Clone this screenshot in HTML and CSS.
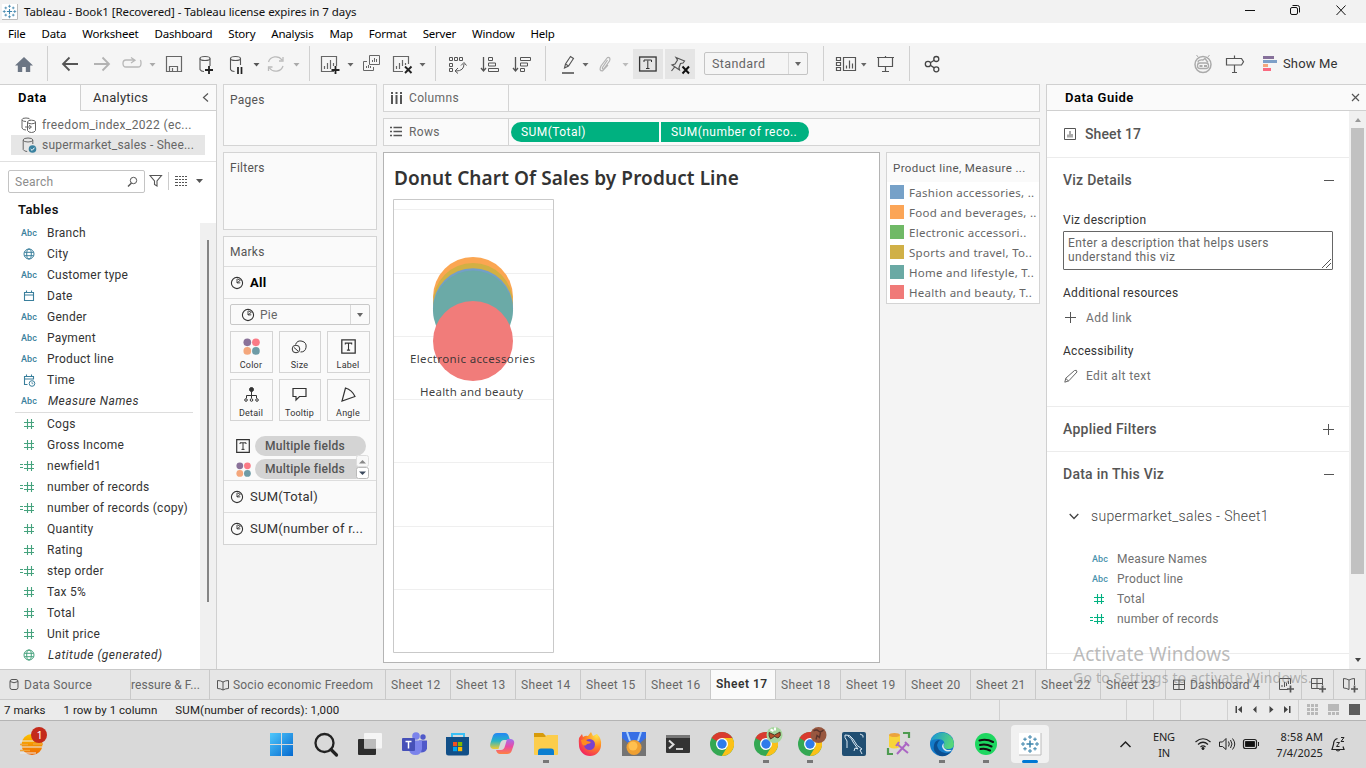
FILE: index.html
```html
<!DOCTYPE html>
<html lang="en">
<head>
<meta charset="utf-8">
<title>Tableau - Book1</title>
<link rel="stylesheet" href="styles.css">
</head>
<body>
<svg class="defs" width="0" height="0">
  <symbol id="pie" viewBox="0 0 14 14"><g fill="none" stroke="#333" stroke-width="1.1"><circle cx="7" cy="7" r="5.600"/><path d="M7 7V3M7 7l3.600-3M7.300 7l3-.2M7.400 2.800l2.800 1.500" stroke-width=".9"/></g></symbol>
  <symbol id="globe" viewBox="0 0 12 12"><g fill="none" stroke="currentColor"><circle cx="6" cy="6" r="5"/><ellipse cx="6" cy="6" rx="2.300" ry="5"/><path d="M1.400 4.300h9.200M1.400 7.700h9.200"/></g></symbol>
  <symbol id="hash" viewBox="0 0 18 12"><path d="M9.500 1v10M13.500 1v10M6 4.500h10M6 8.500h10" fill="none" stroke="currentColor" stroke-width="1.100"/></symbol>
  <symbol id="ehash" viewBox="0 0 18 12"><path d="M9.500 1v10M13.500 1v10M6 4.500h10M6 8.500h10M2 4.500h3M2 7.500h3" fill="none" stroke="currentColor" stroke-width="1.100"/></symbol>
  <symbol id="cal" viewBox="0 0 18 14"><path d="M6.500 3.500h9v8h-9zM6.500 6h9M8.500 1.500v2M13.500 1.500v2" fill="none" stroke="currentColor" stroke-width="1.100"/></symbol>
  <symbol id="calclock" viewBox="0 0 18 14"><path d="M9.500 11.500h-3v-8h9v3M6.500 6h9M8.500 1.500v2M13.500 1.500v2" fill="none" stroke="currentColor" stroke-width="1.100"/><circle cx="14" cy="10.500" r="2.800" fill="none" stroke="currentColor"/><path d="M14 9v1.700h1.300" fill="none" stroke="currentColor" stroke-width=".7"/></symbol>
  <symbol id="tbox" viewBox="0 0 14 14"><path d="M.7.7h12.600v12.600H.7z" fill="none" stroke="#333" stroke-width="1.200"/><path d="M4 5V3.800h6V5M7 4v6.300M5.500 10.400h3" fill="none" stroke="#333"/></symbol>
  <symbol id="dots" viewBox="0 0 15 15"><circle cx="3.800" cy="3.800" r="3.400" fill="#8a7299"/><circle cx="11.400" cy="3.800" r="3.400" fill="#fa7a86"/><circle cx="3.800" cy="11.400" r="3.400" fill="#f4a77c"/><circle cx="11.400" cy="11.400" r="3.400" fill="#6d9ba6"/></symbol>
  <symbol id="chrome" viewBox="0 0 24 24"><circle cx="12" cy="12" r="12" fill="#34a853"/><path d="M12 12 1.600 6A12 12 0 0 1 22.400 6z" fill="#d93a2f"/><path d="M12 6h10.400A12 12 0 0 1 11.800 24L17.200 15z" fill="#fbc117"/><circle cx="12" cy="12" r="6" fill="#fff"/><circle cx="12" cy="12" r="4.700" fill="#2f7bea"/></symbol>
  <symbol id="tableau" viewBox="0 0 20 20"><g fill="none" stroke="#3b83ab" stroke-width="1"><path d="M10 6.500v7M6.500 10h7" stroke-width="1.500"/><path d="M10 1v4M8 3h4M10 15v4M8 17h4M3 8v4M1 10h4M17 8v4M15 10h4M5 3.500v3.500M3.200 5.200h3.600M15 3.500v3.500M13.200 5.200h3.600M5 13v3.500M3.200 14.800h3.600M15 13v3.500M13.200 14.800h3.600"/></g></symbol>
</svg>

<div class="titlebar">
  <svg class="appicon" viewBox="0 0 16 16"><path d="M0 0h16v16H0z" fill="#fff"/><path d="M15.500 0v15.500H0" fill="none" stroke="#bbb"/><use href="#tableau" x="0" y="0" width="15" height="15"/></svg>
  <span class="wintitle">Tableau - Book1 [Recovered] - Tableau license expires in 7 days</span>
  <svg class="winbtns" width="126" height="23" viewBox="1240 0 126 23" fill="none" stroke="#111"><path d="M1245 10.500h10"/><rect x="1290.500" y="7.500" width="7" height="7" rx="1.500"/><path d="M1292.500 5.500h5q2 0 2 2v5"/><path d="M1336.500 5.500l9 9.500M1345.500 5.500l-9 9.500"/></svg>
</div>
<nav class="menubar"><span>File</span><span>Data</span><span>Worksheet</span><span>Dashboard</span><span>Story</span><span>Analysis</span><span>Map</span><span>Format</span><span>Server</span><span>Window</span><span>Help</span></nav>

<div class="toolbar">
  <svg class="tg g1" viewBox="0 46 47 35"><path d="M24 57l9 8.500h-2.800V72h-4.400v-5h-3.600v5h-4.400v-6.500H15z" fill="#6c7684"/></svg>
  <svg class="tg g2" viewBox="48 46 261 35" fill="none" stroke="#555">
    <path d="M63 64h15M69.500 57.500L63 64l6.500 6.500" stroke-width="1.800"/>
    <path d="M94 64h15M102.500 57.500L109 64l-6.500 6.500" stroke="#b3b3b3" stroke-width="1.800"/>
    <path d="M135 60h-9q-3 0-3 3.500t3 3.500h12q3 0 3-3.500t-1-3M131 57.500l4 2.700-4 2.800" stroke="#b8b8b8" stroke-width="1.300"/>
    <path d="M149.500 63h6l-3 3.500z" fill="#aaa" stroke="none"/>
    <path d="M166.500 56.500h15v15h-15zM169.500 71v-4.500h8V71M172.500 71v-3" stroke="#666" stroke-width="1.200"/>
    <g stroke="#555" stroke-width="1.100"><ellipse cx="205" cy="58.500" rx="5" ry="2"/><path d="M200 58.500v11q1 2 4 2M210 58.500V66"/></g><path d="M209 66v8M205 70h8" stroke="#222" stroke-width="1.800"/>
    <g stroke="#555" stroke-width="1.100"><ellipse cx="235.500" cy="58.500" rx="5" ry="2"/><path d="M230.500 58.500v11q1 2 4 2M240.500 58.500V65"/></g><path d="M238 67v7M241.500 67v7" stroke="#222" stroke-width="1.700"/>
    <path d="M253.500 63h6l-3 3.500z" fill="#555" stroke="none"/><path d="M293.500 63h6l-3 3.500z" fill="#aaa" stroke="none"/>
    <path d="M268.500 62a7.500 7 0 0 1 13.500-2M283 66a7.500 7 0 0 1-13.500 2M283 57v4h-4M268.500 71v-4h4" stroke="#bbb" stroke-width="1.300"/>
  </svg>
  <svg class="tg g3" viewBox="310 46 125 35" fill="none" stroke="#666">
    <path d="M334 71.500h-12.500v-15h15V66M324.500 69v-3M327.500 69v-6M330.500 69v-9M333.500 66v-3" stroke-width="1.200"/><path d="M335.500 66v8M331.500 70h8" stroke="#222" stroke-width="1.800"/>
    <path d="M347.500 63h6l-3 3.500zM419.500 63h6l-3 3.500z" fill="#666" stroke="none"/>
    <path d="M369.500 55.500h10v9h-10zM372.500 62v-2M374.500 62v-4M376.500 62v-3M367 61.500h-3.500v9h10V67M366.500 68v-2M368.500 68v-3M370.500 68v-2"/>
    <path d="M403 71.500h-9.500v-15h15V64M396.500 69v-3M399.500 69v-6M402.500 66v-6M405.500 65v-2" stroke-width="1.200"/><path d="M405 66.500l6.500 6.500M411.500 66.500L405 73" stroke="#222" stroke-width="1.900"/>
  </svg>
  <svg class="tg g4" viewBox="436 46 109 35" fill="none" stroke="#555">
    <path d="M449.500 57.500h3v3h-3zM454.500 57.500h3v3h-3zM459.500 57.500h3v3h-3zM449.500 63.500h3v3h-3zM449.500 68.500h3v3h-3z"/><path d="M456 71q8 0 8-7M458 68l-3 3 3 2.500M461 65.500l3-3 2.500 3"/>
    <path d="M483.500 57v13.500M481 68l2.500 3 2.500-3" stroke-width="1.300"/><path d="M488.500 57.500h4v3h-4zM488.500 63h7v3h-7zM488.500 68.500h10v3h-10z"/>
    <path d="M515.500 57v13.500M513 68l2.500 3 2.500-3" stroke-width="1.300"/><path d="M520.500 57.500h10v3h-10zM520.500 63h7v3h-7zM520.500 68.500h4v3h-4z"/>
  </svg>
  <svg class="tg g5" viewBox="546 46 84 35" fill="none" stroke="#555">
    <path d="M564.500 68l1-4 5-7.500 3 2-5 7.500zM565.500 64l3 2" stroke-width="1.100"/><path d="M562 73h12" stroke-width="1.600"/>
    <path d="M582.500 63h6l-3 3.500z" fill="#666" stroke="none"/><path d="M622.500 63h6l-3 3.500z" fill="#bbb" stroke="none"/>
    <path d="M607.500 60l-5 7.500q-.5 2 1.200 1.500l5.800-8q1.500-4-2-3.500l-6.500 8.500q-2.500 5 1.500 5L608 65" stroke="#b3b3b3" stroke-width="1.200"/>
  </svg>
  <svg class="toggle" viewBox="633 49 30 30"><rect x="639.600" y="57" width="16.500" height="14" fill="none" stroke="#333" stroke-width="1.300"/><path d="M644 62v-2h7.500v2M647.800 60.500v8M646 68.500h3.500" fill="none" stroke="#333"/></svg>
  <svg class="toggle" viewBox="665 49 30 30"><path d="M676 57.500l8.500 3.500-1.500 2-2.500.5-1.500 4 .5 2.500-7.500-5 3-1 2.500-4zM675 66.500l-3.500 4.500" fill="none" stroke="#555" stroke-width="1.200"/><path d="M682.500 66.500l6.500 7M689 66.500l-6.500 7" stroke="#111" stroke-width="2"/></svg>
  <div class="fit"><span>Standard</span><i class="caret"></i></div>
  <svg class="tg g6" viewBox="824 46 85 35" fill="none" stroke="#555"><path d="M836.500 57.500h4v3h-4zM836.500 62.500h4v3h-4zM836.500 67.500h4v3h-4zM843.500 57.500h12v13h-12zM846.500 68.500v-3M849.500 68.500v-8M852.500 68.500v-5" stroke-width="1.200"/><path d="M861 63h5.500l-2.700 3.500z" fill="#666" stroke="none"/><path d="M877 57.500h17M878.500 57.500v9h14v-9M885.500 56v2M885.500 66.500v5M882 71.500h7" stroke-width="1.200"/></svg>
  <svg class="tg g7" viewBox="910 46 60 35" fill="none" stroke="#444" stroke-width="1.300"><circle cx="928" cy="64" r="2.700"/><circle cx="936.300" cy="59" r="2.500"/><circle cx="936.300" cy="69.300" r="2.500"/><path d="M930.300 62.700l4-2.500M930.300 65.300l4 2.600"/></svg>
  <svg class="tg g8" viewBox="1186 46 96 35" fill="none" stroke="#aaa"><circle cx="1203" cy="64.500" r="8" stroke-width="1.500"/><path d="M1198.500 57.500l-2-2.500M1207.500 57.500l2-2.500"/><rect x="1197.500" y="63" width="11" height="5.500" rx="2.500" stroke-width="1.300"/><path d="M1199.500 66h3M1204 66h3" stroke-width="2"/><path d="M1198 62.500q0-3 5-2.500l2-1.500 3 4" stroke-width="1.300"/><path d="M1226.500 58.500h15l2 3.300-2 3.200h-15zM1234.500 55.500v3M1234.500 65v7.500M1232 72.500h5" stroke="#555" stroke-width="1.200"/><path d="M1263 57.500h11" stroke="#86709a" stroke-width="3"/><path d="M1263 61.500h14" stroke="#7ea0c8" stroke-width="3"/><path d="M1263 65.500h5" stroke="#f4a77c" stroke-width="3"/><path d="M1263 69.500h8" stroke="#fa6a80" stroke-width="3"/></svg>
  <span class="showme">Show Me</span>
</div>

<main class="work">
  <aside class="datapane">
    <div class="dtabs"><b>Data</b><div>Analytics<svg width="8" height="12" viewBox="0 0 8 12"><path d="M6 1.500L1.500 5.500 6 9.500" fill="none" stroke="#555" stroke-width="1.200"/></svg></div></div>
    <div class="sources">
      <div><svg width="16" height="18" viewBox="0 0 16 18" fill="none" stroke="#666"><path d="M5 14q-3.500 0-4-2V3.500Q1 2 5 2t4 1.500M1 4q1 1.500 4 1.500"/><ellipse cx="10.500" cy="6" rx="4" ry="1.800"/><path d="M6.500 6v8.500q1 2 4 2t4-2V6M4 11h6M8 9l2.500 2L8 13"/></svg><span>freedom_index_2022 (ec...</span></div>
      <div class="on"><svg width="16" height="18" viewBox="0 0 16 18" fill="none" stroke="#666"><ellipse cx="7" cy="4" rx="4.800" ry="2"/><path d="M2.200 4v9.500q1 2 4 2M11.800 4v4"/><circle cx="11.500" cy="13" r="3.800" fill="#3a82a0" stroke="none"/><path d="M9.700 13l1.400 1.400 2.400-2.700" stroke="#fff"/></svg><span>supermarket_sales - Shee...</span></div>
    </div>
    <div class="searchrow">
      <div class="search"><span>Search</span><svg width="12" height="12" viewBox="0 0 12 12" fill="none" stroke="#555"><circle cx="7.500" cy="4.500" r="3.200"/><path d="M5.500 7L2 10.500" stroke-width="1.500"/></svg></div>
      <svg class="ftools" width="62" height="22" viewBox="146 170 62 22" fill="none" stroke="#555"><path d="M150 175.500h11.500l-4.500 5.500v5l-2.500-1.500V181z" stroke-width="1.100"/><path d="M168.500 172v18" stroke="#ccc"/><path d="M175 176.500h12M175 179.500h12M175 182.500h12M175 185.500h12" stroke-width="1.200" stroke-dasharray="3 1 2 1 2 1 2"/><path d="M196 179h7l-3.500 4z" fill="#555" stroke="none"/></svg>
    </div>
    <h3>Tables</h3>
    <div class="fieldwrap">
      <div class="fields">
        <div class="f d"><i>Abc</i>Branch</div>
        <div class="f d"><svg class="gl"><use href="#globe"/></svg>City</div>
        <div class="f d"><i>Abc</i>Customer type</div>
        <div class="f d"><svg class="ca"><use href="#cal"/></svg>Date</div>
        <div class="f d"><i>Abc</i>Gender</div>
        <div class="f d"><i>Abc</i>Payment</div>
        <div class="f d"><i>Abc</i>Product line</div>
        <div class="f d"><svg class="ca"><use href="#calclock"/></svg>Time</div>
        <div class="f d"><i>Abc</i><em>Measure Names</em></div>
        <hr>
        <div class="f m"><svg><use href="#hash"/></svg>Cogs</div>
        <div class="f m"><svg><use href="#hash"/></svg>Gross Income</div>
        <div class="f m"><svg><use href="#ehash"/></svg>newfield1</div>
        <div class="f m"><svg><use href="#ehash"/></svg>number of records</div>
        <div class="f m"><svg><use href="#ehash"/></svg>number of records (copy)</div>
        <div class="f m"><svg><use href="#hash"/></svg>Quantity</div>
        <div class="f m"><svg><use href="#hash"/></svg>Rating</div>
        <div class="f m"><svg><use href="#ehash"/></svg>step order</div>
        <div class="f m"><svg><use href="#hash"/></svg>Tax 5%</div>
        <div class="f m"><svg><use href="#hash"/></svg>Total</div>
        <div class="f m"><svg><use href="#hash"/></svg>Unit price</div>
        <div class="f m"><svg class="gl"><use href="#globe"/></svg><em class="gen">Latitude (generated)</em></div>
      </div>
      <div class="fscroll"><b></b></div>
    </div>
  </aside>

  <section class="cards">
    <div class="card pages">Pages</div>
    <div class="card filters">Filters</div>
    <div class="card marks">
      <div class="mhead">Marks</div>
      <div class="mrow all"><svg width="14" height="14"><use href="#pie"/></svg><b>All</b></div>
      <div class="mbody">
        <div class="msel"><svg width="14" height="14"><use href="#pie"/></svg><span>Pie</span><i class="caret"></i></div>
        <div class="mgrid">
          <div><svg width="17" height="17"><use href="#dots"/></svg>Color</div>
          <div><svg width="17" height="17" viewBox="0 0 17 17" fill="none" stroke="#333"><path d="M4.500 6.500a5.500 5.500 0 1 1 5 7.500"/><circle cx="5" cy="11" r="3.800"/><path d="M3 9.500l4 3.500"/></svg>Size</div>
          <div><svg width="15" height="17" viewBox="0 -1 14 16"><use href="#tbox" width="14" height="14"/></svg>Label</div>
          <div><svg width="17" height="17" viewBox="0 0 17 17" fill="none" stroke="#333"><circle cx="8.500" cy="3.500" r="2" fill="#333"/><path d="M8.500 5v7M3.500 12V9.500h10V12"/><circle cx="3" cy="14" r="1.300"/><circle cx="8.500" cy="14" r="1.300"/><circle cx="14" cy="14" r="1.300"/></svg>Detail</div>
          <div><svg width="17" height="17" viewBox="0 0 17 17" fill="none" stroke="#333"><path d="M2 2.500h13v8H8.500L5 14v-3.500H2z" stroke-width="1.200"/></svg>Tooltip</div>
          <div><svg width="17" height="17" viewBox="0 0 17 17" fill="none" stroke="#333"><path d="M5.500 2L2 15l13-4.500Q12 4 5.500 2z" stroke-width="1.200"/></svg>Angle</div>
        </div>
        <div class="pills">
          <div><svg width="14" height="14"><use href="#tbox"/></svg><span class="gp">Multiple fields</span></div>
          <div><svg width="15" height="15"><use href="#dots"/></svg><span class="gp">Multiple fields</span></div>
          <svg class="spin" width="14" height="24" viewBox="0 0 14 24"><rect x=".5" y=".5" width="12" height="11" rx="2" fill="#f8f8f8" stroke="#ddd"/><rect x=".5" y="12.500" width="12" height="11" rx="2" fill="#fff" stroke="#bbb"/><path d="M3 8.500h7L6.500 5z" fill="#888"/><path d="M3 16.500h7L6.500 20z" fill="#3c4a5e"/></svg>
        </div>
      </div>
      <div class="mrow short"><svg width="14" height="14"><use href="#pie"/></svg><span>SUM(Total)</span></div>
      <div class="mrow"><svg width="14" height="14"><use href="#pie"/></svg><span>SUM(number of r...</span></div>
    </div>
  </section>

  <section class="center">
    <div class="shelf"><div class="slabel"><svg width="13" height="14" viewBox="0 0 13 14"><path d="M2 1v2M6.500 1v2M11 1v2M2 4v9M6.500 4v9M11 4v9" stroke="#555" stroke-width="2"/></svg>Columns</div></div>
    <div class="shelf"><div class="slabel"><svg width="13" height="14" viewBox="0 0 13 14"><path d="M0 2.500h2M3.500 2.500H12M0 6.500h2M3.500 6.500H12M0 10.500h2M3.500 10.500H12" stroke="#555" stroke-width="1.500"/></svg>Rows</div><span class="pill l">SUM(Total)</span><span class="pill r">SUM(number of reco..</span></div>
    <div class="vizrow">
      <div class="viz">
        <h1>Donut Chart Of Sales by Product Line</h1>
        <svg class="chart" width="161" height="454" viewBox="393 199 161 454"><path d="M393.500 199.500h160v453h-160z" fill="#fff" stroke="#c9c9c9"/><path d="M394 209.500h159M394 273.500h159M394 336.500h159M394 399.500h159M394 462.500h159M394 526.500h159M394 589.500h159" stroke="#efefef"/>
          <circle cx="473" cy="297" r="40" fill="#fba652"/><circle cx="473" cy="303" r="40" fill="#d2b044"/><circle cx="473" cy="308.300" r="40" fill="#739fc8"/><circle cx="473" cy="310.500" r="40" fill="#6baaa7"/><circle cx="473" cy="341" r="40" fill="#f17c7a"/>
          <text x="410" y="363" textLength="125" lengthAdjust="spacing">Electronic accessories</text><text x="420" y="396" textLength="103" lengthAdjust="spacing">Health and beauty</text></svg>
      </div>
      <div class="legend">
        <div class="lhead">Product line, Measure ...</div>
        <div class="li"><i class="c1"></i>Fashion accessories, ..</div>
        <div class="li"><i class="c2"></i>Food and beverages, ..</div>
        <div class="li"><i class="c3"></i>Electronic accessori..</div>
        <div class="li"><i class="c4"></i>Sports and travel, To..</div>
        <div class="li"><i class="c5"></i>Home and lifestyle, T..</div>
        <div class="li"><i class="c6"></i>Health and beauty, T..</div>
      </div>
    </div>
  </section>

  <aside class="guide">
    <div class="ghead"><b>Data Guide</b><svg width="9" height="9" viewBox="0 0 9 9"><path d="M1 1l7 7M8 1L1 8" stroke="#555" stroke-width="1.200"/></svg></div>
    <div class="gmain">
      <div class="gbody">
        <div class="gsheet"><svg width="12" height="12" viewBox="0 0 12 12"><path d="M.5.500h11v11H.5z" fill="none" stroke="#555"/><path d="M3 9.500v-3h2V3h2v3h2v3.500z" fill="#aaa"/></svg><span>Sheet 17</span></div>
        <div class="gsec details">
          <div class="gt"><span>Viz Details</span><i class="minus"></i></div>
          <div class="lab first">Viz description</div>
          <div class="area">Enter a description that helps users<br>understand this viz<svg width="9" height="9" viewBox="0 0 9 9"><path d="M0 9l9-9M4 9l5-5" stroke="#555"/></svg></div>
          <div class="lab">Additional resources</div>
          <div class="act"><svg width="14" height="14" viewBox="0 0 14 14"><path d="M6.500 1v11M1 6.500h11" stroke="#555" fill="none"/></svg><span>Add link</span></div>
          <div class="lab acc">Accessibility</div>
          <div class="act"><svg width="14" height="14" viewBox="0 0 14 14"><path d="M.8 13.200l1-4L10.500 1.500q2.500-1 2.500 1.500L4.800 11.800zM1.800 9.500l2.700 2.500" stroke="#666" fill="none"/></svg><span>Edit alt text</span></div>
        </div>
        <div class="gsec filt"><div class="gt"><span>Applied Filters</span><i class="minus plus"></i></div></div>
        <div class="gsec inviz">
          <div class="gt"><span>Data in This Viz</span><i class="minus"></i></div>
          <div class="ds"><svg width="10" height="7" viewBox="0 0 10 7"><path d="M.7 1l4.300 4.500L9.300 1" fill="none" stroke="#444" stroke-width="1.300"/></svg><span>supermarket_sales - Sheet1</span></div>
          <div class="gf"><i>Abc</i>Measure Names</div>
          <div class="gf"><i>Abc</i>Product line</div>
          <div class="gf"><svg><use href="#hash"/></svg>Total</div>
          <div class="gf"><svg><use href="#ehash"/></svg>number of records</div>
        </div>
      </div>
      <div class="gscroll"><i class="up"></i><b></b><i class="down"></i></div>
    </div>
  </aside>
</main>

<div class="tabs">
  <div class="t src"><svg width="10" height="13" viewBox="0 0 10 13" fill="none" stroke="#555"><rect x="1" y="1.500" width="8" height="10" rx="2"/><path d="M1 3.500q4 2.500 8 0"/></svg>Data Source</div>
  <div class="t cut">ressure &amp; F...</div>
  <div class="t story"><svg width="12" height="12" viewBox="0 0 12 12"><path d="M.5 1.500q3 0 5.500 1.500 2.500-1.500 5.500-1.500v8q-3 0-5.500 1.500Q3.500 9.500.5 9.500zM6 3v8" fill="none" stroke="#555"/></svg>Socio economic Freedom</div>
  <div class="t">Sheet 12</div><div class="t">Sheet 13</div><div class="t">Sheet 14</div><div class="t">Sheet 15</div><div class="t">Sheet 16</div><div class="t on">Sheet 17</div><div class="t">Sheet 18</div><div class="t">Sheet 19</div><div class="t">Sheet 20</div><div class="t">Sheet 21</div><div class="t">Sheet 22</div><div class="t">Sheet 23</div>
  <div class="t dash"><svg width="12" height="12" viewBox="0 0 12 12"><path d="M.5 1h11v9.500H.5zM6 1v9.500M.5 5.500h11" fill="none" stroke="#555"/></svg>Dashboard 4</div>
  <div class="t new"><svg width="18" height="18" viewBox="0 0 18 18" fill="none" stroke="#555"><path d="M10 13.500H1.500v-11h11V8M4 11V9M6.500 11V6M8.500 10V7M10.500 8V5"/><path d="M12.500 9.500v7M9 13h7" stroke-width="1.700"/></svg></div>
  <div class="t new"><svg width="18" height="18" viewBox="0 0 18 18" fill="none" stroke="#555"><path d="M9 12.500H1.500v-10h11V9M7 2.500v10M1.500 7.500h11"/><path d="M12.500 9.500v7M9 13h7" stroke-width="1.700"/></svg></div>
  <div class="t new"><svg width="18" height="18" viewBox="0 0 18 18" fill="none" stroke="#555"><path d="M7 13.500Q4 12 1.500 12V2.500Q4 2.500 7 4q3-1.500 5.500-1.500V9M7 4v9.500"/><path d="M12.500 9.500v7M9 13h7" stroke-width="1.700"/></svg></div>
</div>
<div class="status"><div class="stxt"><span>7 marks</span><span>1 row by 1 column</span><span>SUM(number of records): 1,000</span></div><i class="s1"></i><i class="s2"></i><i class="s2"></i><i class="s3"></i>
  <div class="pager"><svg width="70" height="20" viewBox="1228 700 70 20" fill="#444"><path d="M1235.500 706h1.500v7h-1.500zM1242 706v7l-4-3.500zM1256.500 706v7l-3.500-3.500zM1269.500 706v7l4-3.500zM1284 706v7l4-3.500zM1289 706h1.500v7H1289z"/></svg></div>
  <div class="views"><svg width="67" height="20" viewBox="1299 700 67 20" fill="#b8b8b8"><path d="M1307 704h3v3h-3zM1311 704h3v3h-3zM1315 704h3v3h-3zM1307 708h3v3h-3zM1311 708h3v3h-3zM1315 708h3v3h-3zM1307 712h3v3h-3zM1311 712h3v3h-3zM1315 712h3v3h-3zM1328 704h11v7h-11zM1328 712h3v3h-3zM1332 712h3v3h-3zM1336 712h3v3h-3z"/><path d="M1349 704h11v11h-11z" fill="#5c5c5c"/></svg></div>
</div>

<footer class="taskbar">
  <svg class="weather" width="60" height="47" viewBox="0 0 60 47"><defs><linearGradient id="sun" x2="0" y2="1"><stop stop-color="#fcc400"/><stop offset="1" stop-color="#ee6500"/></linearGradient></defs><circle cx="32" cy="23.500" r="10.500" fill="url(#sun)"/><path d="M20 20h14M22 26h20M20 32h16" stroke="#ececec" stroke-width="1.200"/><path d="M20 23.500h8M20 29.500h10M33 23h10" stroke="#f0a53a" stroke-width="1.500"/><circle cx="39" cy="14" r="8" fill="#c42b1c"/><text x="36.500" y="18" class="badge">1</text></svg>
  <div class="apps">
    <svg viewBox="0 0 44 47"><defs><linearGradient id="win" x2="1" y2="1"><stop stop-color="#4fc8fc"/><stop offset="1" stop-color="#0569cf"/></linearGradient></defs><path d="M10 12h11v11H10zM22 12h11v11H22zM10 24h11v11H10zM22 24h11v11H22z" fill="url(#win)"/></svg>
    <svg viewBox="0 0 44 47"><circle cx="20.500" cy="22" r="9" fill="none" stroke="#222" stroke-width="2.300"/><path d="M27 28.500l5.500 5.500" stroke="#222" stroke-width="3.200" stroke-linecap="round"/></svg>
    <svg viewBox="0 0 44 47"><rect x="10" y="18" width="18" height="16" rx="1" fill="#2d2d2d"/><rect x="16" y="12" width="18" height="15.500" rx="1" fill="#f5f5f5"/><path d="M16 18h12v9.500H16z" fill="#bcbcbc"/></svg>
    <svg viewBox="0 0 44 47"><circle cx="24" cy="15" r="3.800" fill="#7b83eb"/><circle cx="31" cy="16" r="2.700" fill="#5059c9"/><path d="M27 19.500h8v8q-1 4-6 4z" fill="#5059c9"/><path d="M17 19.500h13V28q-1 6-6.500 6T17 29z" fill="#7b83eb"/><rect x="10" y="17" width="13" height="13" rx="1" fill="#4650b8"/><path d="M13.500 20.500h6M16.500 20.500v7" stroke="#fff" stroke-width="1.500"/></svg>
    <svg viewBox="0 0 44 47"><path d="M16 16v-3h12v3" fill="none" stroke="#3ac0f5" stroke-width="2"/><path d="M10 16h23v16q0 2.500-2.500 2.500h-18Q10 34.500 10 32z" fill="#114f88"/><path d="M17 21h4.200v4.200H17z" fill="#f25022"/><path d="M22 21h4.200v4.200H22z" fill="#7fba00"/><path d="M17 26h4.200v4.200H17z" fill="#00a4ef"/><path d="M22 26h4.200v4.200H22z" fill="#ffb900"/></svg>
    <svg viewBox="0 0 44 47"><defs><linearGradient id="cp" x2="0" y2="1"><stop stop-color="#2487f5"/><stop offset=".5" stop-color="#28b5c4"/><stop offset="1" stop-color="#f3cb30"/></linearGradient><linearGradient id="cq" x2="0" y2="1"><stop stop-color="#a070f0"/><stop offset=".5" stop-color="#e94ca5"/><stop offset="1" stop-color="#ff8140"/></linearGradient></defs><path d="M17 12h8q3 0 4 4l1 3h-6q-3 0-4 4l-1.500 5H13q-4-1-2.500-6l2-6q1-4 4.500-4z" fill="url(#cp)"/><path d="M27 33h-7q-3 0-4-4h5q3 0 4-4l2-7h4q4 1 3 5l-2 6q-1 4-5 4z" fill="url(#cq)"/></svg>
    <svg viewBox="0 0 44 47" class="run"><path d="M10 12h9l3 3h12v8H10z" fill="#d79b0b"/><path d="M10 16h11l2-2h11v19q0 1-1 1H11q-1 0-1-1z" fill="#fccd4c"/><path d="M14 34v-3.500q0-3 3-3h10q3 0 3 3V34z" fill="#0b7ed0"/></svg>
    <svg viewBox="0 0 44 47"><defs><radialGradient id="ff" cx=".8" cy=".15" r="1"><stop stop-color="#ffe44a"/><stop offset=".45" stop-color="#ff8a20"/><stop offset="1" stop-color="#f21b63"/></radialGradient></defs><path d="M11 17l3-4 1 3q3-2 5-1l3-4 2 4 4-2q5 5 4 11a11 11 0 0 1-22 0q-.5-4 0-7z" fill="url(#ff)"/><circle cx="21.500" cy="23.500" r="5.500" fill="#7942cd"/><path d="M13 19q5-2 6 1l4 1q-1 2-4 2-2 3-5 0z" fill="#ff8b1e"/></svg>
    <svg viewBox="0 0 44 47"><path d="M10 11h24v24H10z" fill="#747474"/><path d="M10 11h24v6l-6 5H16l-6-5z" fill="#376fe5"/><path d="M15 11l3 9M29 11l-3 9" stroke="#a8d0ff" stroke-width="2"/><circle cx="22" cy="26.500" r="7.500" fill="#efa032"/><circle cx="21" cy="25" r="4.500" fill="#ffc04f"/></svg>
    <svg viewBox="0 0 44 47"><rect x="10" y="14" width="24" height="18" rx="1" fill="#333"/><path d="M10 14h24v3H10z" fill="#777"/><path d="M13 19.500l4.500 4-4.500 4" fill="none" stroke="#ddd" stroke-width="2"/><path d="M20 28h7" stroke="#fff" stroke-width="1.500"/></svg>
    <svg viewBox="0 0 44 47"><use href="#chrome" x="10" y="11" width="24" height="24"/></svg>
    <svg viewBox="0 0 44 47" class="run"><use href="#chrome" x="10" y="11" width="24" height="24"/><circle cx="30.500" cy="14" r="8" fill="#a5d69c"/><path d="M25 11.500l5.500 2.500 5.500-3q1.500 4-2 6l-3.500-1.500-4 2.500q-2-3-1.500-6.500z" fill="#b4532a" stroke="#3a2a1a" stroke-width=".8"/><path d="M26.500 8.500l3 1.500M31 6.500v3" stroke="#fff" stroke-width="2"/></svg>
    <svg viewBox="0 0 44 47" class="run"><use href="#chrome" x="10" y="11" width="24" height="24"/><circle cx="30.500" cy="14" r="8" fill="#98573f"/><path d="M25.500 10q3-2 5 0t5-1M28 18.500l1-4 2.500 2 1-5" stroke="#5a342c" stroke-width="1.300" fill="none"/></svg>
    <svg viewBox="0 0 44 47"><rect x="10" y="11" width="24" height="24" rx="2" fill="#204e72"/><path d="M15 27v-7q-3-4-2-6 5-1 8 4 4 8 9 10l-2 1 2 4M16 15q4 2 5 6l5 7-3-1-1 3M28 13l3 1.500v2" fill="none" stroke="#d9e8f3"/></svg>
    <svg viewBox="0 0 44 47"><path d="M27 12h6v5M12 27v6h5" fill="none" stroke="#4d9b50" stroke-width="2.200"/><path d="M13 14v12q5 3 11 0V14z" fill="#f8d43a"/><ellipse cx="18.500" cy="14" rx="5.500" ry="2" fill="#eba33c"/><path d="M21 23l11 9M31 22L21 33M20 25l3-4M29 21l4 4" stroke="#ab66c4" stroke-width="2"/></svg>
    <svg viewBox="0 0 44 47" class="run"><defs><linearGradient id="eg" x2="1" y2=".3"><stop stop-color="#1592dc"/><stop offset="1" stop-color="#56d67b"/></linearGradient></defs><circle cx="22" cy="23" r="12" fill="#147bc9"/><path d="M10.500 20A12 12 0 0 1 34 23q0 5-6 5-5 0-4-3 2-6-5-7-6 0-8.500 2z" fill="url(#eg)"/><path d="M20 19q-5 4-1 10 5 5 12 2-4 5-11 4-8-4-6-11 1-5 6-5z" fill="#0b4f91"/><path d="M24 22q-2 5 3 7h5q-4 3-8 0-4-4 0-7z" fill="#dce8ee"/></svg>
    <svg viewBox="0 0 44 47" class="run"><circle cx="22" cy="23" r="11" fill="#1ed760"/><path d="M15.500 19.500q7-2 13.500 1.500M16 24q6-1.500 11.500 1.500M16.500 28q5-1 9.500 1.500" fill="none" stroke="#111" stroke-width="2.100" stroke-linecap="round"/></svg>
    <svg viewBox="0 0 44 47" class="act-app"><rect x="3" y="4" width="38" height="38" rx="4" fill="#f1f1f1"/><path d="M11 12h22v22H11z" fill="#fff"/><path d="M33 12v22H11" fill="none" stroke="#bbb"/><use href="#tableau" x="12" y="13" width="20" height="20"/><rect x="14" y="39" width="16" height="3" rx="1.500" fill="#0078d4"/></svg>
  </div>
  <div class="tray">
    <svg width="24" height="47" viewBox="0 0 24 47"><path d="M7.500 26l5-5 5 5" fill="none" stroke="#222" stroke-width="1.500"/></svg>
    <div class="lang">ENG<br>IN</div>
    <svg class="trayicons" width="72" height="47" viewBox="1190 721 72 47" fill="none" stroke="#222"><path d="M1194.500 742q7.500-6.500 15 0M1197 744.500q5-4.500 10 0M1199.500 747q2.500-2.200 5 0" stroke-width="1.200"/><circle cx="1202" cy="748.500" r="1.100" fill="#222"/><path d="M1218.500 742h3l3.500-3.500v11l-3.500-3h-3zM1227.500 741.500q1.500 2.500 0 5M1229.500 740q3 4 0 8M1231.500 738.500q4.500 5.500 0 11"/><rect x="1242.500" y="739.500" width="13" height="9" rx="2" stroke-width="1.200"/><path d="M1244.500 741.500h9v5h-9z" fill="#111"/><path d="M1257.500 742v4"/></svg>
    <div class="clock">8:58 AM<br>7/4/2025</div>
    <svg width="18" height="47" viewBox="0 0 18 47" fill="none" stroke="#222"><path d="M7.500 17.500q-4 1-4 6L2 28.500h12l-1-3M6 28.500q2 3 4 0" stroke-width="1.200"/><path d="M6.500 21.500h3l-3 4h3M11 16.500h3l-3 4h3"/></svg>
  </div>
</footer>
<div class="watermark"><div>Activate Windows</div><p>Go to Settings to activate Windows.</p></div>
</body>
</html>
```

FILE: styles.css
```css
* { box-sizing: border-box; }
body { margin: 0; width: 1366px; height: 768px; overflow: hidden; position: relative; display: flex; flex-direction: column; font: 12px/16px Roboto, "Liberation Sans", sans-serif; letter-spacing: .25px; color: #333; background: #f4f4f4; }
svg { display: block; flex: none; }
.defs { position: absolute; }
i { font-style: normal; }

.titlebar { height: 23px; flex: none; background: #f2f2f2; display: flex; align-items: center; padding-left: 2px; color: #111; }
.appicon { width: 16px; height: 16px; margin-right: 6px; }
.wintitle { font: 11.500px/22px "Noto Sans", sans-serif; letter-spacing: -.07px; }
.winbtns { margin-left: auto; }
.menubar { height: 20px; flex: none; background: #fff; color: #000; display: flex; gap: 16px; padding-left: 8px; font: 11.500px/21px "Noto Sans", sans-serif; letter-spacing: -.2px; }

.toolbar { height: 41px; flex: none; background: #f5f5f5; display: flex; align-items: center; color: #333; }
.tg { height: 35px; box-sizing: content-box; border-left: 1px solid #d0d0d0; }
.g1 { width: 47px; border: 0; }
.g2 { width: 261px; }
.g3 { width: 125px; }
.g4 { width: 109px; }
.g5 { width: 84px; margin-right: 3px; }
.g6 { width: 85px; }
.g7 { width: 60px; }
.g8 { width: 96px; margin-left: 216px; border: 0; }
.toggle { width: 30px; height: 30px; background: #e5e5e5; margin-right: 2px; }
.fit { width: 104px; height: 23px; margin: 0 15px 0 7px; border: 1px solid #c4c4c4; border-radius: 2px; display: flex; line-height: 21px; padding-left: 7px; font-size: 12.500px; color: #666; letter-spacing: .4px; }
.caret { margin-left: auto; width: 19px; border-left: 1px solid #d8d8d8; display: grid; place-items: center; }
.caret::after { content: ""; border: 3.500px solid transparent; border-top: 4px solid #666; border-bottom: 0; }
.showme { font-size: 13px; margin-left: 1px; letter-spacing: .15px; }

.work { height: 585px; flex: none; display: flex; }
.datapane { width: 217px; border-top: 1px solid #d0d0d0; border-right: 1px solid #d0d0d0; background: #fff; display: flex; flex-direction: column; }
.dtabs { height: 26px; flex: none; display: flex; font-size: 13px; line-height: 25px; }
.dtabs b { width: 80px; padding-left: 18px; color: #000; font-weight: 600; letter-spacing: .5px; }
.dtabs div { flex: 1; border-left: 1px solid #d0d0d0; border-bottom: 1px solid #d0d0d0; background: #fafafa; padding: 0 6px 0 12px; display: flex; align-items: center; justify-content: space-between; }
.sources { height: 51px; flex: none; padding: 4px 11px 0; border-bottom: 1px solid #e0e0e0; color: #666; }
.sources div { height: 20px; display: flex; align-items: center; padding-left: 10px; gap: 5px; white-space: nowrap; letter-spacing: .37px; }
.sources .on { background: #e6e6e6; letter-spacing: .22px; }
.searchrow { display: flex; padding: 8px 0 0 8px; }
.search { width: 137px; height: 23px; border: 1px solid #c4c4c4; border-radius: 2px; padding: 0 6px; display: flex; align-items: center; justify-content: space-between; color: #8c8c8c; }
.ftools { margin-left: 1px; }
.datapane h3 { margin: 8px 0 0 18px; font-size: 13px; line-height: 18px; color: #111; font-weight: 600; height: 22px; flex: none; letter-spacing: .4px; }
.fieldwrap { flex: 1; display: flex; }
.fields { width: 200px; }
.f { height: 21px; display: flex; align-items: center; line-height: 20px; }
.f.d { padding-bottom: 2px; }
.f i, .f svg { flex: none; color: #3a7f9c; width: 18px; height: 12px; margin: 1px 9px 0 18px; }
.f i { font: 500 9px/12px Roboto, sans-serif; padding-left: 3px; width: 20px; letter-spacing: .15px; margin-right: 9px; }
.f .gl { width: 12px; margin: 1px 12px 0 23px; }
.f .ca { height: 14px; }
.f svg { margin-right: 11px; }
.f.m svg { color: #45a27d; }
.f em { letter-spacing: .45px; padding-left: 1px; }
.f .gen { letter-spacing: .47px; }
.fields hr { height: 1px; border: 0; background: #ddd; margin: 0 7px 0 15px; }
.fscroll { width: 16px; background: #f0f0f0; padding: 17px 0 0 7px; }
.fscroll b { display: block; width: 2px; height: 362px; background: #858585; }

.cards { width: 154px; margin-left: 6px; display: flex; flex-direction: column; gap: 6px; }
.card { border: 1px solid #d4d4d4; background: #fafafa; padding: 7px 6px; color: #555; }
.pages { height: 62px; }
.filters { height: 78px; }
.marks { height: 309px; padding: 0; }
.mhead { height: 30px; padding: 7px 6px; border-bottom: 1px solid #ddd; }
.mrow { height: 32px; display: flex; align-items: center; gap: 6px; padding-left: 6px; color: #333; font-size: 13px; white-space: nowrap; }
.short { height: 31px; }
.mrow + .mrow { border-top: 1px solid #ddd; }
.all { border-bottom: 1px solid #ddd; }
.all b { color: #000; font-size: 13px; }
.mbody { height: 182px; padding: 5px 6px 0; border-bottom: 1px solid #ddd; }
.msel { height: 21px; width: 140px; border: 1px solid #c8c8c8; border-radius: 2px; display: flex; align-items: center; padding-left: 10px; gap: 5px; color: #666; }
.msel .caret { align-self: stretch; }
.mgrid { display: grid; grid-template-columns: 43px 42px 43px; gap: 6px; margin-top: 6px; }
.mgrid div { height: 42px; border: 1px solid #d4d4d4; display: flex; flex-direction: column; align-items: center; padding: 6px 1px 0 0; gap: 4px; font-size: 9px; line-height: 12px; letter-spacing: .2px; color: #333; }
.pills { margin-top: 15px; display: flex; flex-direction: column; gap: 3px; position: relative; }
.pills div { height: 20px; display: flex; align-items: center; padding-left: 6px; }
.gp { margin-left: auto; width: 111px; height: 20px; line-height: 20px; border-radius: 10px; background: #d4d4d4; padding-left: 10px; font-weight: 500; letter-spacing: .25px; margin-right: 4px; }
.spin { position: absolute; right: 0; bottom: 0; }

.center { width: 657px; margin-left: 6px; display: flex; flex-direction: column; gap: 6px; }
.shelf { height: 28px; border: 1px solid #d4d4d4; background: #fafafa; display: flex; align-items: center; }
.slabel { width: 125px; height: 26px; border-right: 1px solid #d4d4d4; display: flex; align-items: center; gap: 6px; padding-left: 6px; color: #666; letter-spacing: .35px; }
.pill { width: 148px; height: 20px; line-height: 20px; background: #00b180; color: #fff; padding-left: 10px; margin-left: 2px; font-size: 12px; letter-spacing: .45px; white-space: nowrap; }
.pill.l { border-radius: 10px 0 0 10px; }
.pill.r { border-radius: 0 10px 10px 0; }
.vizrow { display: flex; justify-content: space-between; align-items: flex-start; }
.viz { width: 497px; height: 511px; background: #fff; border: 1px solid #b4b4b4; padding: 10px 9px 0; }
.viz h1 { margin: 0 0 6px 1px; font: 600 19px/30px "Noto Sans", sans-serif; letter-spacing: .1px; white-space: nowrap; color: #333; }
.chart text { font: 11.500px "Noto Sans", sans-serif; fill: #333; letter-spacing: 0; fill-opacity: .95; }
.legend { width: 154px; height: 152px; border: 1px solid #d4d4d4; background: #fff; font: 11.500px/20px "Noto Sans", sans-serif; letter-spacing: .28px; color: #666; white-space: nowrap; }
.lhead { height: 29px; line-height: 30px; background: #fafafa; padding-left: 6px; color: #555; font-size: 11.500px; font-family: Roboto, sans-serif; letter-spacing: .4px; }
.li { height: 20px; display: flex; align-items: center; gap: 5px; padding-left: 3px; line-height: 18px; padding-top: 1px; }
.li i { width: 14px; height: 14px; margin-top: -1px; }
.c1 { background: #76a1c8; }
.c2 { background: #fba557; }
.c3 { background: #70b966; }
.c4 { background: #d0b047; }
.c5 { background: #6aa9a4; }
.c6 { background: #f07a78; }

.guide { width: 320px; margin-left: 6px; border-left: 1px solid #d0d0d0; border-top: 1px solid #d0d0d0; background: #fff; display: flex; flex-direction: column; color: #555; }
.ghead { height: 26px; flex: none; border-bottom: 1px solid #d0d0d0; background: #fafafa; display: flex; align-items: center; justify-content: space-between; padding: 0 6px 0 18px; color: #000; font-size: 13px; }
.ghead b { font-weight: 600; letter-spacing: .5px; }
.gmain { flex: 1; display: flex; }
.gbody { width: 302px; }
.gsheet { height: 47px; border-bottom: 1px solid #ececec; display: flex; align-items: center; padding-left: 17px; gap: 9px; font-size: 14px; font-weight: 500; letter-spacing: .1px; }
.gsec { padding: 0 15px 0 16px; border-bottom: 1px solid #ececec; }
.gt { display: flex; align-items: center; justify-content: space-between; font-size: 14px; line-height: 20px; font-weight: 500; letter-spacing: .25px; }
.details { height: 249px; padding-top: 12px; }
.filt { height: 45px; padding-top: 12px; }
.inviz { height: 202px; padding-top: 12px; }
.minus { width: 10px; height: 11px; background: linear-gradient(#555, #555) 0 5px / 100% 1px no-repeat; }
.plus { width: 11px; background: linear-gradient(#555, #555) 0 5px / 100% 1px no-repeat, linear-gradient(#555, #555) 5px 0 / 1px 100% no-repeat; }
.lab { color: #333; font-size: 12px; letter-spacing: .28px; margin-top: 15px; }
.lab.first { margin-top: 22px; }
.lab.acc { margin-top: 17px; }
.area { position: relative; width: 270px; height: 39px; margin-top: 3px; border: 1px solid #666; border-radius: 1px; padding: 4px; line-height: 14px; letter-spacing: .35px; color: #666; }
.area svg { position: absolute; right: 1px; bottom: 1px; }
.act { display: flex; align-items: center; gap: 8px; margin-top: 9px; letter-spacing: .4px; color: #707070; padding-left: 1px; }
.ds { display: flex; align-items: center; gap: 12px; padding-left: 6px; margin: 22px 0; line-height: 20px; font-size: 14px; font-weight: 300; letter-spacing: .33px; color: #444; }
.gf { height: 20px; display: flex; align-items: center; line-height: 20px; padding-left: 24px; color: #707070; letter-spacing: .2px; }
.ds + .gf { margin-top: 23px; }
.gf i { width: 30px; padding-left: 5px; font: 500 9px/12px Roboto, sans-serif; letter-spacing: .15px; color: #4a93ad; }
.gf svg { width: 18px; height: 12px; color: #00b180; margin: 0 11px 0 1px; }
.gscroll { width: 17px; background: #f0f0f0; display: flex; flex-direction: column; align-items: center; }
.gscroll b { width: 13px; height: 446px; background: #c1c1c1; }
.up, .down { border: 3.500px solid transparent; }
.up { border-bottom: 4px solid #999; border-top: 0; margin: 7px 0 6px; }
.down { border-top: 4px solid #444; border-bottom: 0; margin-top: auto; margin-bottom: 7px; }

.tabs { height: 31px; flex: none; display: flex; border-top: 1px solid #c9c9c9; border-bottom: 1px solid #c9c9c9; background: #e6e6e6; color: #666; line-height: 30px; letter-spacing: .35px; }
.t { width: 65px; flex: none; border-right: 1px solid #c9c9c9; padding-left: 5px; white-space: nowrap; overflow: hidden; display: flex; align-items: center; }
.t.on { background: #fafafa; color: #333; font-weight: 600; letter-spacing: .5px; line-height: 28px; align-items: flex-start; }
.src { width: 131px; padding-left: 9px; gap: 5px; letter-spacing: .28px; }
.cut { width: 79px; padding-left: 0; letter-spacing: .08px; }
.story { width: 176px; padding-left: 7px; gap: 4px; letter-spacing: .2px; }
.dash { width: 104px; padding-left: 7px; gap: 5px; letter-spacing: .2px; }
.new { width: 32px; padding-left: 8px; }
.status { height: 21px; flex: none; background: #ebebeb; border-bottom: 1px solid #b4b4b4; display: flex; color: #222; }
.stxt { width: 999px; display: flex; gap: 18px; padding-left: 4px; line-height: 20px; font-size: 11.500px; letter-spacing: .03px; }
.stxt span + span + span { letter-spacing: .13px; }
.status > i { border-left: 1px solid #d0d0d0; }
.s1 { width: 127px; }
.s2 { width: 27px; }
.s3 { width: 47px; }
.pager, .views { border-left: 1px solid #d0d0d0; }
.pager { width: 71px; }
.views { width: 68px; }

.taskbar { height: 47px; flex: none; background: #d9d9d9; display: flex; color: #222; font: 11.500px/16px "Noto Sans", sans-serif; letter-spacing: -.2px; }
.weather { width: 60px; margin-right: 200px; }
.badge { font: 11px "Noto Sans", sans-serif; fill: #fff; }
.apps { display: flex; }
.apps svg { width: 44px; height: 47px; }
.run { background: linear-gradient(#777, #777) 19px 39px / 6px 3px no-repeat; }
.tray { margin-left: auto; display: flex; padding-right: 18px; }
.lang, .clock { padding-top: 8px; font-size: 11px; }
.lang { width: 54px; text-align: center; }
.clock { width: 60px; text-align: right; margin-right: 7px; white-space: nowrap; letter-spacing: .1px; }

.watermark { position: absolute; left: 1073px; top: 642px; color: rgba(120, 120, 120, .5); font: 19px/24px "Noto Sans", sans-serif; letter-spacing: .02px; white-space: nowrap; }
.watermark p { margin: 3px 0 0; font-size: 14px; line-height: 17px; letter-spacing: .2px; }
```
